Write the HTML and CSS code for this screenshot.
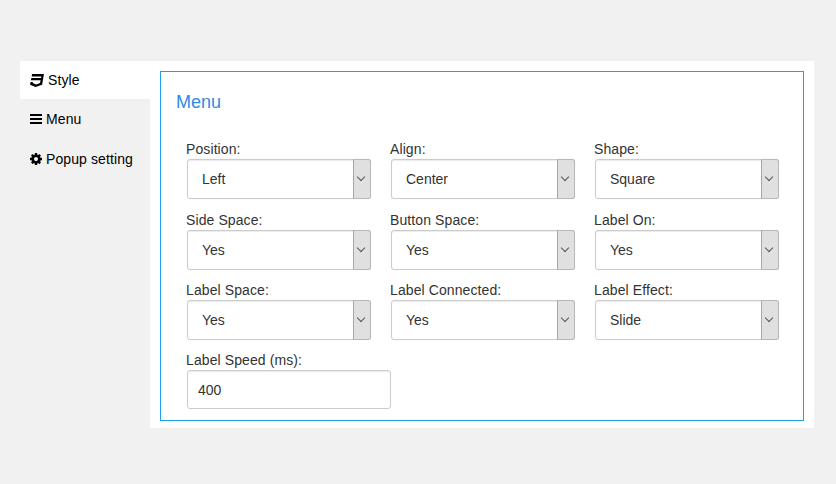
FILE: index.html
```html
<!DOCTYPE html>
<html lang="en">
<head>
    <meta charset="UTF-8">
    <title>Settings</title>
    <link rel="stylesheet" href="styles.css">
</head>
<body>
<div class="wrap">
    <ul class="tabs">
        <li class="active">
            <svg class="ico ico-css" viewBox="0 32 480 448"><path d="M480 32l-64 368-223.3 80L0 400l19.6-94.8h82l-8 40.6L210 390.2l134.1-44.4 18.8-97.1H29.5l16-82h333.7l10.5-52.7H56.3l16.3-82H480z"/></svg>Style
        </li>
        <li>
            <svg class="ico" viewBox="0 0 12 12"><path d="M0 1h12v2H0zM0 5h12v2H0zM0 9h12v2H0z"/></svg>Menu
        </li>
        <li>
            <svg class="ico" viewBox="0 0 1536 1536"><path d="M1024 768q0-106-75-181t-181-75-181 75-75 181 75 181 181 75 181-75 75-181zm512-109v222q0 12-8 23t-20 13l-185 28q-19 54-39 91 35 50 107 138 10 12 10 25t-9 23q-27 37-99 108t-94 71q-12 0-26-9l-138-108q-44 23-91 38-16 136-29 186-7 28-36 28h-222q-14 0-24.5-8.5t-11.5-21.5l-28-184q-49-16-90-37l-141 107q-10 9-25 9-14 0-25-11-126-114-165-168-7-10-7-23 0-12 8-23 15-21 51-66.5t54-70.5q-27-50-41-99l-183-27q-13-2-21-12.5t-8-23.5v-222q0-12 8-23t19-13l186-28q14-46 39-92-40-57-107-138-10-12-10-24 0-10 9-23 26-36 98.5-107.5t94.5-71.5q13 0 26 10l138 107q44-23 91-38 16-136 29-186 7-28 36-28h222q14 0 24.5 8.5t11.5 21.5l28 184q49 16 90 37l142-107q9-9 24-9 13 0 25 10 129 119 165 170 7 8 7 22 0 12-8 23-15 21-51 66.5t-54 70.5q26 50 41 98l183 28q13 2 21 12.5t8 23.5z"/></svg>Popup setting
        </li>
    </ul>
    <div class="content">
        <div class="panel">
            <h3>Menu</h3>
            <form class="fields" action="javascript:;">
                <div class="field">
                    <label>Position:</label>
                    <div class="sel"><select><option>Left</option></select></div>
                </div>
                <div class="field">
                    <label>Align:</label>
                    <div class="sel"><select><option>Center</option></select></div>
                </div>
                <div class="field">
                    <label>Shape:</label>
                    <div class="sel"><select><option>Square</option></select></div>
                </div>
                <div class="field">
                    <label>Side Space:</label>
                    <div class="sel"><select><option>Yes</option></select></div>
                </div>
                <div class="field">
                    <label>Button Space:</label>
                    <div class="sel"><select><option>Yes</option></select></div>
                </div>
                <div class="field">
                    <label>Label On:</label>
                    <div class="sel"><select><option>Yes</option></select></div>
                </div>
                <div class="field">
                    <label>Label Space:</label>
                    <div class="sel"><select><option>Yes</option></select></div>
                </div>
                <div class="field">
                    <label>Label Connected:</label>
                    <div class="sel"><select><option>Yes</option></select></div>
                </div>
                <div class="field">
                    <label>Label Effect:</label>
                    <div class="sel"><select><option>Slide</option></select></div>
                </div>
                <div class="field">
                    <label>Label Speed (ms):</label>
                    <input class="num" type="text" value="400">
                </div>
            </form>
        </div>
    </div>
</div>
</body>
</html>
```
FILE: styles.css
```css
*,
*::before,
*::after {
    margin: 0;
    padding: 0;
    box-sizing: border-box;
}

body {
    background-color: #f1f1f1;
    font-family: "Liberation Sans", Arial, sans-serif;
    font-size: 14px;
    color: #333;
}

ul {
    list-style: none;
}

.wrap {
    display: flex;
    width: 794px;
    height: 367px;
    margin: 61px 0 0 20px;
}

.tabs {
    width: 130px;
    flex-shrink: 0;
    color: #000;
    letter-spacing: .1px;
}

.tabs li {
    display: flex;
    align-items: center;
    height: 40px;
    padding-left: 10px;
}

.tabs li.active {
    height: 38px;
    background-color: #fff;
}

.ico {
    width: 12px;
    height: 12px;
    margin-right: 4px;
    fill: #000;
}

.ico-css {
    width: 14px;
    height: 13px;
}

.content {
    flex: 1;
    min-width: 0;
    padding: 10px;
    background-color: #fff;
}

.panel {
    height: 350px;
    padding: 20px 15px 0;
    border: 1px solid #1e9ff2;
}

.panel h3 {
    height: 20px;
    font-size: 18px;
    font-weight: 400;
    line-height: 20px;
    color: #2f8ae4;
}

.fields {
    display: grid;
    grid-template-columns: repeat(3, 204px);
    grid-auto-rows: 70.4px;
    margin: 27.2px 0 0 10px;
}

.field label {
    display: block;
    height: 20px;
    line-height: 20px;
    letter-spacing: .1px;
}

.sel {
    position: relative;
    width: 184px;
    height: 40px;
    margin-left: 1px;
    border-radius: 3px;
    box-shadow: 0 0 1px rgba(0, 0, 0, .15);
}

.sel select {
    display: block;
    width: 100%;
    height: 100%;
    padding-left: 14px;
    border: 1px solid #ccc;
    border-radius: 3px;
    outline: none;
    appearance: none;
    background-color: #fff;
    font-family: inherit;
    font-size: 14px;
    color: #333;
    box-shadow: inset 0 1px 1px rgba(0, 0, 0, .08);
}

.sel::before {
    content: "";
    position: absolute;
    top: 0;
    right: 0;
    width: 18px;
    height: 40px;
    border: 1px solid #b8b8b8;
    border-left-color: #a6a6a6;
    border-radius: 0 3px 3px 0;
    background-color: #e0e0e0;
    pointer-events: none;
}

.sel::after {
    content: "";
    position: absolute;
    top: 15px;
    right: 7px;
    width: 6px;
    height: 6px;
    border-right: 1px solid #555;
    border-bottom: 1px solid #555;
    transform: rotate(45deg);
    pointer-events: none;
}

.num {
    display: block;
    width: 204px;
    height: 39px;
    margin-left: 1px;
    padding-left: 10px;
    border: 1px solid #ccc;
    border-radius: 3px;
    outline: none;
    font-family: inherit;
    font-size: 14px;
    color: #333;
    box-shadow: inset 0 1px 1px rgba(0, 0, 0, .08);
}
```
